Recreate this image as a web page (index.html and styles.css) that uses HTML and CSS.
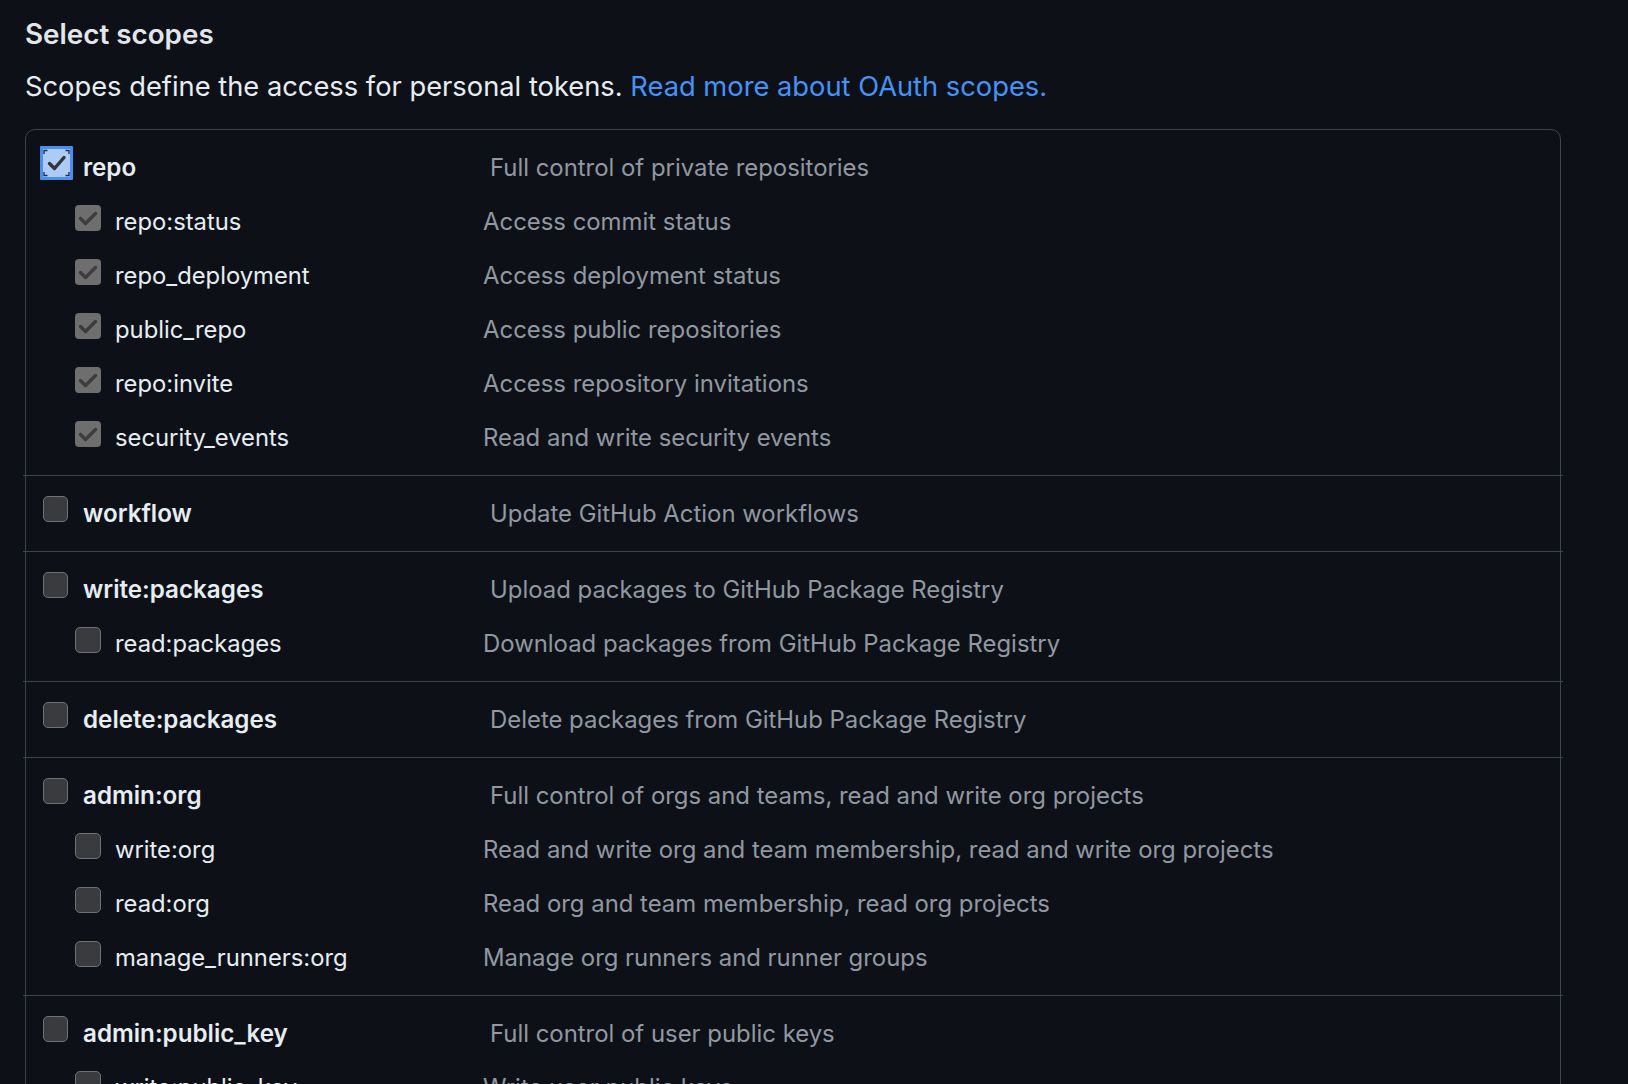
FILE: index.html
```html
<!DOCTYPE html>
<html lang="en">
<head>
<meta charset="utf-8">
<title>Select scopes</title>
<link rel="stylesheet" href="styles.css">
</head>
<body>
<div class="page">
  <h3 class="title">Select scopes</h3>
  <p class="intro">Scopes define the access for personal tokens. <a class="link" href="#">Read more about OAuth scopes.</a></p>

  <div class="scopes">
    <div class="group">
      <div class="row top">
        <span class="cb cb-focus">
          <svg viewBox="0 0 27 28" width="27" height="28">
            <path d="M1 5 V1.5 H4.5 M22.5 1.5 H26 V5 M26 23 V26.5 H22.5 M4.5 26.5 H1 V23" fill="none" stroke="#22344d" stroke-width="1.4"/>
            <path d="M6.5 14.5 L11.5 19.5 L21 8.5" fill="none" stroke="#333538" stroke-width="3.4" stroke-linecap="round" stroke-linejoin="round"/>
          </svg>
        </span>
        <span class="name">repo</span>
        <span class="desc">Full control of private repositories</span>
      </div>
      <div class="row sub">
        <span class="cb cb-checked"><svg viewBox="0 0 26 26" width="26" height="26"><path d="M5.5 13.5 L10.5 18.5 L20.5 8.5" fill="none" stroke="#3d3d3d" stroke-width="3.4" stroke-linecap="round" stroke-linejoin="round"/></svg></span>
        <span class="name">repo:status</span>
        <span class="desc">Access commit status</span>
      </div>
      <div class="row sub">
        <span class="cb cb-checked"><svg viewBox="0 0 26 26" width="26" height="26"><path d="M5.5 13.5 L10.5 18.5 L20.5 8.5" fill="none" stroke="#3d3d3d" stroke-width="3.4" stroke-linecap="round" stroke-linejoin="round"/></svg></span>
        <span class="name">repo_deployment</span>
        <span class="desc">Access deployment status</span>
      </div>
      <div class="row sub">
        <span class="cb cb-checked"><svg viewBox="0 0 26 26" width="26" height="26"><path d="M5.5 13.5 L10.5 18.5 L20.5 8.5" fill="none" stroke="#3d3d3d" stroke-width="3.4" stroke-linecap="round" stroke-linejoin="round"/></svg></span>
        <span class="name">public_repo</span>
        <span class="desc">Access public repositories</span>
      </div>
      <div class="row sub">
        <span class="cb cb-checked"><svg viewBox="0 0 26 26" width="26" height="26"><path d="M5.5 13.5 L10.5 18.5 L20.5 8.5" fill="none" stroke="#3d3d3d" stroke-width="3.4" stroke-linecap="round" stroke-linejoin="round"/></svg></span>
        <span class="name">repo:invite</span>
        <span class="desc">Access repository invitations</span>
      </div>
      <div class="row sub">
        <span class="cb cb-checked"><svg viewBox="0 0 26 26" width="26" height="26"><path d="M5.5 13.5 L10.5 18.5 L20.5 8.5" fill="none" stroke="#3d3d3d" stroke-width="3.4" stroke-linecap="round" stroke-linejoin="round"/></svg></span>
        <span class="name">security_events</span>
        <span class="desc">Read and write security events</span>
      </div>
    </div>

    <div class="group">
      <div class="row top">
        <span class="cb"></span>
        <span class="name">workflow</span>
        <span class="desc">Update GitHub Action workflows</span>
      </div>
    </div>

    <div class="group">
      <div class="row top">
        <span class="cb"></span>
        <span class="name">write:packages</span>
        <span class="desc">Upload packages to GitHub Package Registry</span>
      </div>
      <div class="row sub">
        <span class="cb"></span>
        <span class="name">read:packages</span>
        <span class="desc">Download packages from GitHub Package Registry</span>
      </div>
    </div>

    <div class="group">
      <div class="row top">
        <span class="cb"></span>
        <span class="name">delete:packages</span>
        <span class="desc">Delete packages from GitHub Package Registry</span>
      </div>
    </div>

    <div class="group">
      <div class="row top">
        <span class="cb"></span>
        <span class="name">admin:org</span>
        <span class="desc">Full control of orgs and teams, read and write org projects</span>
      </div>
      <div class="row sub">
        <span class="cb"></span>
        <span class="name">write:org</span>
        <span class="desc">Read and write org and team membership, read and write org projects</span>
      </div>
      <div class="row sub">
        <span class="cb"></span>
        <span class="name">read:org</span>
        <span class="desc">Read org and team membership, read org projects</span>
      </div>
      <div class="row sub">
        <span class="cb"></span>
        <span class="name">manage_runners:org</span>
        <span class="desc">Manage org runners and runner groups</span>
      </div>
    </div>

    <div class="group">
      <div class="row top">
        <span class="cb"></span>
        <span class="name">admin:public_key</span>
        <span class="desc">Full control of user public keys</span>
      </div>
      <div class="row sub">
        <span class="cb"></span>
        <span class="name">write:public_key</span>
        <span class="desc">Write user public keys</span>
      </div>
      <div class="row sub">
        <span class="cb"></span>
        <span class="name">read:public_key</span>
        <span class="desc">Read user public keys</span>
      </div>
    </div>
  </div>
</div>
</body>
</html>
```

FILE: styles.css
```css
html, body {
  margin: 0;
  padding: 0;
  background: #0d1117;
  overflow: hidden;
}

.page {
  padding: 18px 0 0 25px;
  font-family: Inter, "Noto Sans", sans-serif;
  color: #e6edf3;
}

.title {
  margin: 0 0 21px;
  font-size: 27.8px;
  line-height: 32px;
  font-weight: 600;
  color: #e1e6eb;
}

.intro {
  margin: 0 0 26px;
  font-size: 27.3px;
  line-height: 32px;
  font-weight: 400;
  color: #e6edf3;
}

.link {
  color: #4493f8;
  text-decoration: none;
}

.scopes {
  box-sizing: border-box;
  width: 1536px;
  border: 1px solid #3d444d;
  border-radius: 10px;
}

.group {
  margin: 0 -3px;
  padding: 9px 3px 10px;
}

.group + .group {
  border-top: 1px solid #3d444d;
}

.row {
  display: grid;
  grid-template-columns: 25px 392px 1fr;
  column-gap: 15px;
  align-items: center;
  height: 54px;
  padding-left: 17px;
}

.row.top {
  height: 56px;
}

.row.sub {
  grid-template-columns: 26px 354px 1fr;
  column-gap: 14px;
  padding-left: 49px;
}

.name {
  padding-top: 2px;
  font-size: 23.8px;
  line-height: 30px;
  color: #e6edf3;
  white-space: nowrap;
}

.top .name {
  font-size: 24.2px;
  font-weight: 600;
}

.desc {
  padding-top: 2px;
  font-size: 23.9px;
  line-height: 30px;
  color: #9198a1;
  white-space: nowrap;
}

.sub .name,
.sub .desc {
  padding-top: 0;
}

.cb {
  box-sizing: border-box;
  display: block;
  width: 25px;
  height: 26px;
  margin-bottom: 9px;
  border: 1.5px solid #6f7175;
  border-radius: 5px;
  background: #393b3f;
}

.sub .cb {
  width: 26px;
  margin-bottom: 8px;
}

.cb svg {
  display: block;
}

.cb-checked {
  border: none;
  border-radius: 4px;
  background: #6e6e6e;
}

.cb-focus {
  width: 33px;
  height: 34px;
  margin-left: -3px;
  margin-right: -5px;
  margin-bottom: 9px;
  border: 3px solid #4a8ff0;
  border-radius: 1px;
  background: #adcbf5;
}
```
